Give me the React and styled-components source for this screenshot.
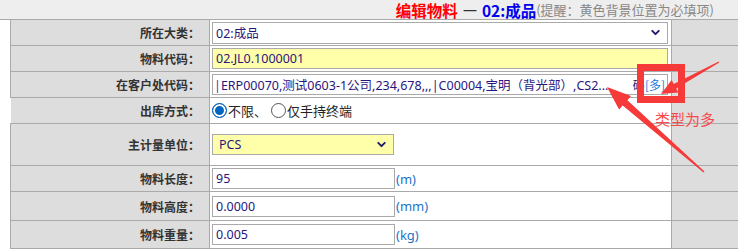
import React from "react";
import styled, { createGlobalStyle } from "styled-components";
import { ChevronDown } from "lucide-react";

const GlobalStyle = createGlobalStyle`
  body {
    margin: 0;
    background: #fff;
    font-family: "Noto Sans", "Noto Sans CJK SC", sans-serif;
  }
`;

const Page = styled.div`
  position: relative;
  width: 738px;
  height: 250px;
  overflow: hidden;
`;

const Header = styled.div`
  height: 19px;
  border-bottom: 1px solid #aaa;
  background: #eeeeee;
  display: flex;
  justify-content: flex-end;
  align-items: center;
  padding-right: 24px;
  line-height: 16px;
  white-space: nowrap;
`;

const TitleRed = styled.span`
  color: #ff0000;
  font-family: "Noto Sans CJK SC", sans-serif;
  font-weight: bold;
  font-size: 15.5px;
`;

const TitleDash = styled.span`
  color: #333;
  font-size: 14px;
  margin: 0 5px;
`;

const TitleBlue = styled.span`
  color: #0000ee;
  font-family: "Noto Sans CJK SC", sans-serif;
  font-weight: bold;
  font-size: 15.5px;
`;

const TitleHint = styled.span`
  color: #888;
  font-family: "Noto Sans CJK SC", sans-serif;
  font-size: 13px;
`;

const Form = styled.div`
  margin-left: 10px;
`;

const Row = styled.div`
  display: grid;
  grid-template-columns: 200px 462px 66px;
  height: ${(p) => p.$h}px;
  border-bottom: 1px solid #aaa;
`;

const Label = styled.div`
  box-sizing: border-box;
  background: #dddddd;
  border-left: 1px solid ${(p) => (p.$noLeft ? "#fff" : "#aaa")};
  border-right: 1px solid #aaa;
  display: flex;
  align-items: center;
  justify-content: flex-end;
  padding-right: 9px;
  font-family: "Noto Sans CJK SC", sans-serif;
  font-weight: bold;
  font-size: 12px;
  color: #333;
`;

const Cell = styled.div`
  box-sizing: border-box;
  border-right: 1px solid #aaa;
  display: flex;
  align-items: center;
  padding-left: 2px;
  gap: 1px;
`;

const Side = styled.div`
  background: #dddddd;
`;

const Field = styled.div`
  box-sizing: border-box;
  width: ${(p) => p.$w}px;
  height: ${(p) => p.$ht || 21}px;
  border: 1px solid #aaa;
  background: ${(p) => (p.$req ? "#ffffaa" : "#fff")};
  display: flex;
  align-items: center;
  justify-content: space-between;
  padding: 0 ${(p) => p.$pr ?? 5}px 0 ${(p) => p.$pl ?? 3}px;
  font-size: 12.5px;
  color: #2a1580;
  white-space: nowrap;
  overflow: hidden;
`;

const Mark = styled.span`
  color: #7a1aa0;
`;

const Tail = styled.span`
  font-family: "Noto Sans CJK SC", sans-serif;
  font-size: 12px;
  color: #1b1b6e;
`;

const MoreLink = styled.span`
  color: #1a7adf;
`;

const Unit = styled.span`
  color: #1a73c8;
  font-size: 13px;
`;

const RadioGroup = styled.label`
  display: flex;
  align-items: center;
  font-family: "Noto Sans CJK SC", sans-serif;
  font-size: 13px;
  color: #222;
  margin-right: 3px;
`;

const Radio = styled.span`
  box-sizing: border-box;
  width: 15px;
  height: 15px;
  border-radius: 50%;
  border: 1px solid ${(p) => (p.$on ? "#0058b8" : "#555")};
  background: ${(p) => (p.$on ? "#0067c0" : "#fff")};
  box-shadow: ${(p) => (p.$on ? "inset 0 0 0 2px #fff, inset 0 0 0 3px #0067c0" : "none")};
  margin-right: 1px;
`;

const Overlay = styled.svg`
  position: absolute;
  left: 0;
  top: 0;
  pointer-events: none;
`;

const Box = styled.div`
  position: absolute;
  left: 637px;
  top: 64px;
  width: 48px;
  height: 39px;
  box-sizing: border-box;
  border: 7px solid #f63a3a;
`;

const Note = styled.div`
  position: absolute;
  left: 655px;
  top: 108px;
  color: #f74b4b;
  font-family: "Noto Sans CJK SC", sans-serif;
  font-size: 15px;
`;

function arrow(tx, ty, px, py, head, hw, neck, tail) {
  const dx = px - tx;
  const dy = py - ty;
  const len = Math.hypot(dx, dy);
  const ux = dx / len;
  const uy = dy / len;
  const nx = -uy;
  const ny = ux;
  const bx = px - ux * head;
  const by = py - uy * head;
  const pts = [
    [tx + nx * tail, ty + ny * tail],
    [bx + nx * neck, by + ny * neck],
    [bx + nx * hw, by + ny * hw],
    [px, py],
    [bx - nx * hw, by - ny * hw],
    [bx - nx * neck, by - ny * neck],
    [tx - nx * tail, ty - ny * tail],
  ];
  return pts.map((p) => p.map((v) => v.toFixed(1)).join(",")).join(" ");
}

const Chevron = () => <ChevronDown size={13} strokeWidth={3.5} color="#1b1b6e" />;

export default function App() {
  return (
    <Page>
      <GlobalStyle />
      <Header>
        <TitleRed>编辑物料</TitleRed>
        <TitleDash>—</TitleDash>
        <TitleBlue>02:成品</TitleBlue>
        <TitleHint>(提醒：黄色背景位置为必填项)</TitleHint>
      </Header>
      <Form>
        <Row $h={25}>
          <Label>所在大类：</Label>
          <Cell>
            <Field $w={456} $ht={22}>
              <span>02:成品</span>
              <Chevron />
            </Field>
          </Cell>
          <Side />
        </Row>
        <Row $h={25}>
          <Label>物料代码：</Label>
          <Cell>
            <Field $w={456} $req>
              02.JL0.1000001
            </Field>
          </Cell>
          <Side />
        </Row>
        <Row $h={25}>
          <Label>在客户处代码：</Label>
          <Cell>
            <Field $w={456} $pl={1} $pr={2}>
              <span>
                <Mark>|</Mark>ERP00070,测试0603-1公司,234,678,,,|C00004,宝明（背光部）,CS2...
              </span>
              <Tail>
                码<MoreLink>[多]</MoreLink>
              </Tail>
            </Field>
          </Cell>
          <Side />
        </Row>
        <Row $h={25}>
          <Label $noLeft>出库方式：</Label>
          <Cell>
            <RadioGroup>
              <Radio $on />
              不限、
            </RadioGroup>
            <RadioGroup>
              <Radio />
              仅手持终端
            </RadioGroup>
          </Cell>
          <Side />
        </Row>
        <Row $h={41}>
          <Label>主计量单位：</Label>
          <Cell>
            <Field $w={182} $ht={21} $req $pl={6}>
              <span>PCS</span>
              <Chevron />
            </Field>
          </Cell>
          <Side />
        </Row>
        <Row $h={25}>
          <Label>物料长度：</Label>
          <Cell>
            <Field $w={183} $ht={21}>
              95
            </Field>
            <Unit>(m)</Unit>
          </Cell>
          <Side />
        </Row>
        <Row $h={28}>
          <Label>物料高度：</Label>
          <Cell>
            <Field $w={183} $ht={21}>
              0.0000
            </Field>
            <Unit>(mm)</Unit>
          </Cell>
          <Side />
        </Row>
        <Row $h={27}>
          <Label>物料重量：</Label>
          <Cell>
            <Field $w={183} $ht={21}>
              0.005
            </Field>
            <Unit>(kg)</Unit>
          </Cell>
          <Side />
        </Row>
      </Form>
      <Box />
      <Note>类型为多</Note>
      <Overlay width="738" height="250">
        <polygon points={arrow(704, 172, 607, 87, 24, 9, 3.5, 0.8)} fill="#f63a3a" />
        <polygon points={arrow(719, 62, 661, 94, 16, 7, 2.5, 0.6)} fill="#f63a3a" />
      </Overlay>
    </Page>
  );
}
